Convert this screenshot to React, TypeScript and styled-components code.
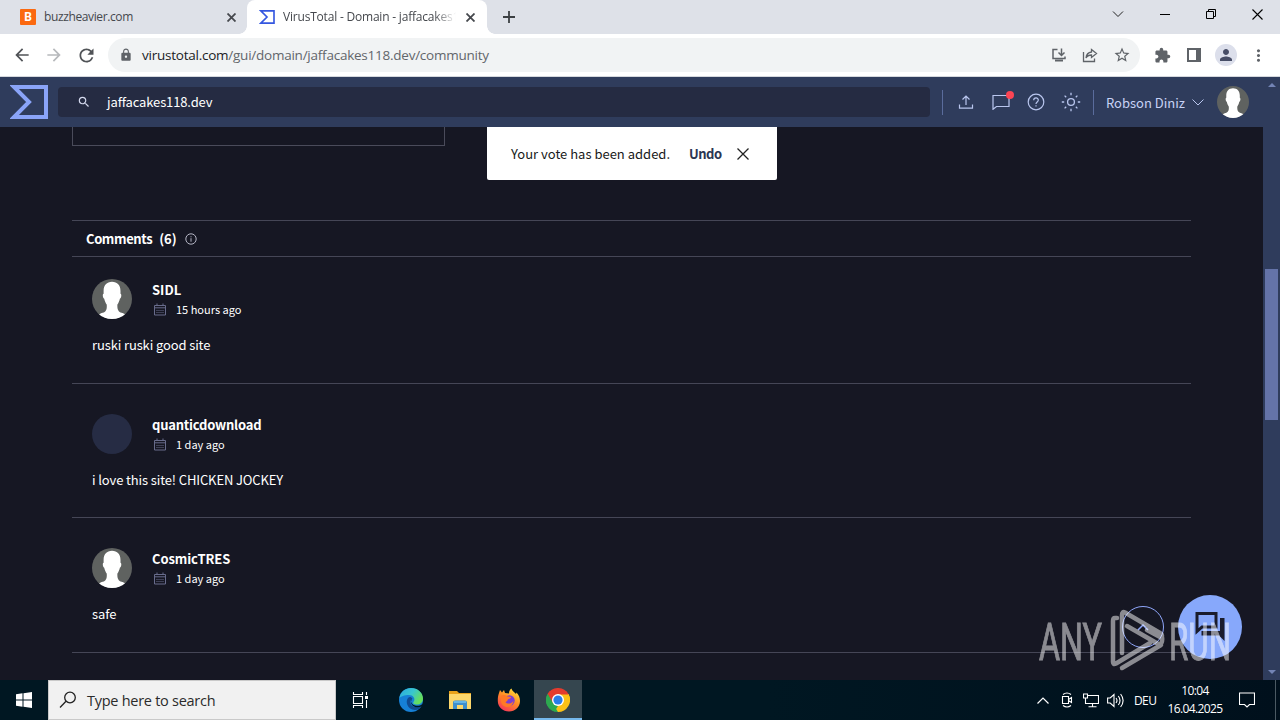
import React from 'react';
import styled, { createGlobalStyle } from 'styled-components';
import {
  MdArrowBack,
  MdArrowForward,
  MdRefresh,
  MdLock,
  MdStarBorder,
  MdExtension,
  MdPerson,
  MdMoreVert,
  MdSearch,
} from 'react-icons/md';

interface CommentData {
  id: number;
  author: string;
  nameSpacing: number;
  date: string;
  text: string;
  hasPhoto: boolean;
  top: number;
  height: number;
}

const comments: CommentData[] = [
  { id: 1, author: 'SIDL', nameSpacing: 0, date: '15 hours ago', text: 'ruski ruski good site', hasPhoto: true, top: 22, height: 127 },
  { id: 2, author: 'quanticdownload', nameSpacing: -0.22, date: '1 day ago', text: 'i love this site! CHICKEN JOCKEY', hasPhoto: false, top: 30, height: 134 },
  { id: 3, author: 'CosmicTRES', nameSpacing: -0.1, date: '1 day ago', text: 'safe', hasPhoto: true, top: 30, height: 135 },
];

const SigmaLogo: React.FC<{ width: number; height: number; color: string }> = ({ width, height, color }) => (
  <svg width={width} height={height} viewBox="0 0 38 34" fill="none">
    <path d="M4 2H36V32H4L19 17Z" stroke={color} strokeWidth="4" />
  </svg>
);

const Silhouette: React.FC<{ size: number }> = ({ size }) => (
  <svg width={size} height={size} viewBox="0 0 40 40">
    <defs>
      <clipPath id={`face${size}`}>
        <circle cx="20" cy="20" r="20" />
      </clipPath>
    </defs>
    <g clipPath={`url(#face${size})`}>
      <rect width="40" height="40" fill="#5f6260" />
      <path
        d="M20 2.800c5.400 0 8.600 3.600 8.500 9.400v2.600c1.400.3.800 4.500-.6 5-.6 2.600-1.500 4.400-2.500 5.700-.2 3 .1 5.200 1.400 6.700 2 2 5.600 1.600 7.500 4.200V42H6v-5.600c1.900-2.600 5.500-2.200 7.400-4.200 1.300-1.500 1.600-3.700 1.300-6.700-1-1.300-1.900-3.100-2.500-5.700-1.400-.5-2-4.700-.6-5v-2.600C11.500 6.400 14.700 2.800 20 2.800z"
        fill="#fff"
      />
    </g>
  </svg>
);

const CalendarIcon: React.FC = () => (
  <svg width="12" height="13" viewBox="0 0 12 13" fill="none" stroke="#686c8c">
    <path d="M.5 2.500h11v9.500H.5zM.5 4.800h11M3 .5v2M9 .5v2" />
    <path d="M2.500 7.500h7M2.500 9.500h7" strokeDasharray="1 1" />
  </svg>
);

const App: React.FC = () => {
  return (
    <>
      <GlobalStyle />
      <Screen>
        <TabStrip>
          <InactiveTab>
            <BuzzIcon>B</BuzzIcon>
            <TabTitle $spacing={-0.38}>buzzheavier.com</TabTitle>
            <CrossIcon size={9} weight={1.8} color="#45484d" />
          </InactiveTab>
          <ActiveTab>
            <SigmaLogo width={16} height={14} color="#3557e0" />
            <FadedTitle $spacing={-0.2}>VirusTotal - Domain - jaffacakes118</FadedTitle>
            <CrossIcon size={9} weight={1.8} color="#45484d" />
          </ActiveTab>
          <NewTab>
            <svg width="12" height="12" viewBox="0 0 12 12" stroke="#3c4043" strokeWidth="1.800">
              <path d="M6 0v12M0 6h12" />
            </svg>
          </NewTab>
          <WindowButtons>
            <svg width="12" height="8" viewBox="0 0 12 8" fill="none" stroke="#222">
              <path d="M1 1.500l5 5 5-5" />
            </svg>
            <svg width="10" height="10" viewBox="0 0 10 10" stroke="#000">
              <path d="M0 5.500h10" />
            </svg>
            <svg width="10" height="10" viewBox="0 0 10 10" fill="none" stroke="#000">
              <path d="M.5 2.500h7v7h-7zM2.500 2.500v-2h7v7h-2" />
            </svg>
            <CrossIcon size={11} weight={1.1} color="#000" />
          </WindowButtons>
        </TabStrip>

        <Toolbar>
          <NavButtons>
            <MdArrowBack size={20} color="#505357" />
            <MdArrowForward size={20} color="#b7b9bc" />
            <MdRefresh size={21} color="#505357" />
          </NavButtons>
          <AddressBar>
            <MdLock size={14} color="#5f6368" />
            <Url>
              <b>virustotal.com</b>/gui/domain/jaffacakes118.dev/community
            </Url>
            <AddressActions>
              <svg width="16" height="16" viewBox="0 0 16 16" fill="none" stroke="#5f6368" strokeWidth="1.500">
                <path d="M6.500 2.500H2v9h12V9.500" />
                <path d="M10.500 1.500v6.500M7.500 5.500l3 3 3-3" />
                <path d="M4 13.500h8" strokeWidth="2" />
              </svg>
              <svg width="16" height="16" viewBox="0 0 16 16" fill="none" stroke="#5f6368" strokeWidth="1.300">
                <path d="M1.500 5v9.500h11V11.500" />
                <path d="M9.500 2.500l5 4-5 4V8C7 8 5 9 4 11c.3-3.500 2.300-5.500 5.500-6z" />
              </svg>
              <MdStarBorder size={18} color="#5f6368" />
            </AddressActions>
          </AddressBar>
          <ToolbarActions>
            <MdExtension size={17} color="#5f6368" />
            <svg width="14" height="14" viewBox="0 0 14 14">
              <path d="M0 0h14v14H0zM2 2v10h7V2z" fill="#5f6368" fillRule="evenodd" />
            </svg>
            <Profile>
              <MdPerson size={18} color="#474d66" />
            </Profile>
            <MdMoreVert size={19} color="#5f6368" />
          </ToolbarActions>
        </Toolbar>

        <Page>
          <PageColumn>
            <SiteHeader>
              <SigmaLogo width={38} height={34} color="#8aa4f8" />
              <SearchBox>
                <MdSearch size={14} color="#d5daee" />
                <span>jaffacakes118.dev</span>
              </SearchBox>
              <HeaderActions>
                <Separator />
                <ActionSlot>
                  <svg width="16" height="16" viewBox="0 0 16 16" fill="none" stroke="#b9c6ee" strokeWidth="1.200">
                    <path d="M8 11V2M4.500 5.500L8 2l3.500 3.500M1.500 10.500v3.700h13v-3.700" />
                  </svg>
                </ActionSlot>
                <ActionSlot>
                  <BubbleWrap>
                    <svg width="18" height="16" viewBox="0 0 18 16" fill="none" stroke="#b9c6ee" strokeWidth="1.200">
                      <path d="M1 1.500h16v11H4.500L1 15.300z" />
                    </svg>
                    <RedDot />
                  </BubbleWrap>
                </ActionSlot>
                <ActionSlot>
                  <svg width="18" height="18" viewBox="0 0 18 18" fill="none" stroke="#b9c6ee" strokeWidth="1.200">
                    <circle cx="9" cy="9" r="7.800" />
                    <path d="M6.700 7.200C6.700 4.200 11.300 4.200 11.300 7c0 2-2.300 1.900-2.300 4M9 12.300v1.300" />
                  </svg>
                </ActionSlot>
                <ActionSlot>
                  <svg width="20" height="20" viewBox="0 0 20 20" fill="none" stroke="#b9c6ee" strokeWidth="1.300">
                    <circle cx="10" cy="10" r="3.400" />
                    <path d="M10 .8v2.400M10 16.800v2.400M.8 10h2.400M16.800 10h2.400M3.600 3.600l1.600 1.600M14.800 14.800l1.600 1.600M3.600 16.400l1.600-1.600M14.800 5.200l1.600-1.600" />
                  </svg>
                </ActionSlot>
                <Separator />
              </HeaderActions>
              <UserName>Robson Diniz</UserName>
              <svg width="12" height="7" viewBox="0 0 12 7" fill="none" stroke="#b9c6ee">
                <path d="M.5.500L6 6 11.500.500" />
              </svg>
              <UserAvatar>
                <Silhouette size={32} />
              </UserAvatar>
            </SiteHeader>

            <Content>
              <VoteBox />
              <CommentsHeader>
                <span>Comments</span>
                <span>(6)</span>
                <svg width="12" height="12" viewBox="0 0 12 12" fill="none" stroke="#b4b5c4">
                  <circle cx="6" cy="6" r="5.200" />
                  <path d="M6 5.200v3.500M6 3.300v1" />
                </svg>
              </CommentsHeader>
              {comments.map((comment) => (
                <CommentItem key={comment.id} $top={comment.top} $height={comment.height}>
                  <CommentHead>
                    {comment.hasPhoto ? <Silhouette size={40} /> : <EmptyAvatar />}
                    <CommentMeta>
                      <Author $spacing={comment.nameSpacing}>{comment.author}</Author>
                      <DateRow>
                        <CalendarIcon />
                        <span>{comment.date}</span>
                      </DateRow>
                    </CommentMeta>
                  </CommentHead>
                  <CommentText>{comment.text}</CommentText>
                </CommentItem>
              ))}
            </Content>
          </PageColumn>
          <Scrollbar>
            <Arrow $down={false} />
            <Thumb />
            <Arrow $down />
          </Scrollbar>

          <Toast>
            <span>Your vote has been added.</span>
            <b>Undo</b>
            <CrossIcon size={12} weight={1.3} color="#222" />
          </Toast>

          <ScrollTop>
            <svg width="12" height="7" viewBox="0 0 12 7" fill="none" stroke="#8fa6fa" strokeWidth="1.500">
              <path d="M1 6l5-5 5 5" />
            </svg>
          </ScrollTop>
          <ChatButton>
            <svg width="30" height="30" viewBox="0 0 30 30" fill="none">
              <path d="M2 1.500h19v13.500H7l-5 4.500z" stroke="#1a1c2c" strokeWidth="3" />
              <path d="M25 6h4.500v23l-5.500-5.500H6.500V19H25z" fill="#1a1c2c" />
            </svg>
          </ChatButton>
          <Watermark>
            <svg width="200" height="75" viewBox="0 0 200 75">
              <text x="2" y="60" textLength="63" lengthAdjust="spacingAndGlyphs">ANY</text>
              <g fill="none" stroke="#fff" strokeWidth="4.500" strokeLinecap="round" strokeLinejoin="round">
                <path d="M80 18h-2q-2 0-2 3v41q0 3 3 1.500L113 43" />
                <path d="M85 53V15q0-4 3-2.500L123 33q4 2.500 0 4L110 30" />
                <path d="M90 26l33 19q3-3 2-8M124 45L85 68" />
              </g>
              <text x="132" y="60" textLength="62" lengthAdjust="spacingAndGlyphs">RUN</text>
            </svg>
          </Watermark>
        </Page>

        <Taskbar>
          <StartButton>
            <svg width="16" height="16" viewBox="0 0 16 16" fill="#fff">
              <path d="M0 2.200l6.500-.9v6.200H0zM7.500 1.200L16 0v7.500H7.500zM0 8.500h6.500v6.200L0 13.800zM7.500 8.500H16V16l-8.500-1.200z" />
            </svg>
          </StartButton>
          <TaskSearch>
            <svg width="18" height="18" viewBox="0 0 18 18" fill="none" stroke="#222" strokeWidth="1.300">
              <circle cx="11" cy="6.500" r="5.300" />
              <path d="M7 10.300L1 16.500" />
            </svg>
            <span>Type here to search</span>
          </TaskSearch>
          <TaskApps>
            <TaskButton $active={false}>
              <svg width="17" height="16" viewBox="0 0 17 16" fill="none" stroke="#fff" strokeWidth="1.100">
                <path d="M1.500 0v2.500h9V0M1.500 4.500h9v7h-9zM1.500 16v-2.500h9V16M14.500 0v3M14.500 8v8" />
                <path d="M13 5.500h3" strokeWidth="3" />
              </svg>
            </TaskButton>
            <TaskButton $active={false}>
              <svg width="24" height="24" viewBox="0 0 24 24">
                <defs>
                  <linearGradient id="edgeTop" x1="0" y1="0" x2="1" y2=".5">
                    <stop offset="0" stopColor="#2aa8e0" />
                    <stop offset=".55" stopColor="#38c6cf" />
                    <stop offset="1" stopColor="#66df5a" />
                  </linearGradient>
                </defs>
                <circle cx="12" cy="12" r="12" fill="#1680d6" />
                <path d="M.3 10C1.500 3.500 6.500 0 12 0c7 0 12 5 12 10.500 0 4-3 6-6 6-3.500 0-4.500-1.300-3.500-2.500 2.500-3.500-.5-7-4.500-7C5.500 7 1.500 8.500.3 10z" fill="url(#edgeTop)" />
                <path d="M9.500 9.500C5.500 13 8.500 22 16 22c2.500 0 4.500-1 6.500-4C18 20.500 11 19 11.500 13.500c0-2 1.200-2.500 2-3-1-1.500-3-2-4-1z" fill="#104b91" />
                <path d="M12.800 10.500c-2 2.500-.3 6.500 4.200 7.200 2.500.4 4.500-.4 6-1.500l1-.2-1.500 2.500c-5 2.300-11-.5-10.500-5z" fill="#001722" />
              </svg>
            </TaskButton>
            <TaskButton $active={false}>
              <svg width="22" height="20" viewBox="0 0 22 20">
                <path d="M0 1h8l2 2h12v4H0z" fill="#e8a21a" />
                <path d="M0 4h22v15H0z" fill="#fcd76b" />
                <path d="M4 19v-6.500q0-2 2-2h10q2 0 2 2V19h-4v-4H8v4z" fill="#3f8fcc" />
                <path d="M5 11h12v2H5z" fill="#65b5e6" />
              </svg>
            </TaskButton>
            <TaskButton $active={false}>
              <svg width="24" height="24" viewBox="0 0 24 24">
                <defs>
                  <linearGradient id="fox" x1=".8" y1="0" x2=".2" y2="1">
                    <stop offset="0" stopColor="#ffe43d" />
                    <stop offset=".45" stopColor="#ff8f25" />
                    <stop offset="1" stopColor="#f5305c" />
                  </linearGradient>
                </defs>
                <path d="M2 5l1-3 2 2.500L7 2l1 3 4 .5C12 3 13 1.500 14.500.500c.5 2.500 3 3.500 4.500 5.500l.5-1.500C22 7 23 10 23 13c0 6-5 10.500-11 10.500S.8 19 .8 13C.8 10 1 7.500 2 5z" fill="url(#fox)" />
                <circle cx="12.500" cy="12.500" r="5.200" fill="#7b3fd3" />
                <path d="M4 8c2-1.500 5-1 6.500.5L14 9c0 1.500-2 2-3 2.200-.5 2-2 2-2.500 3 1.500 2 6 2 8-1.500-.5 5-4.500 7-8 6S3 14 4 8z" fill="#ff7a26" />
              </svg>
            </TaskButton>
            <TaskButton $active>
              <svg width="24" height="24" viewBox="0 0 24 24">
                <path d="M12 12L1.600 6A12 12 0 0 1 22.400 6z" fill="#e33b2e" />
                <path d="M12 12l10.400-6A12 12 0 0 1 12 24z" fill="#fbc116" />
                <path d="M12 12v12A12 12 0 0 1 1.600 6z" fill="#2da94f" />
                <path d="M12 6h10.400q1.600 3 1.600 6L17 14.500z" fill="#fbc116" />
                <path d="M17.200 15L12 24l-3-5 3-2z" fill="#fbc116" />
                <path d="M1.600 6l5.200 9 2-5L12 6.500h10.500L20 3H4z" fill="#e33b2e" />
                <path d="M1.600 6l5.200 9L12 18l-3.500 5.500A12 12 0 0 1 1.600 6z" fill="#2da94f" />
                <circle cx="12" cy="12" r="6" fill="#fff" />
                <circle cx="12" cy="12" r="4.600" fill="#287de8" />
              </svg>
            </TaskButton>
          </TaskApps>
          <Tray>
            <TrayIcon>
              <svg width="12" height="7" viewBox="0 0 12 7" fill="none" stroke="#fff" strokeWidth="1.200">
                <path d="M.5 6.500L6 1l5.500 5.500" />
              </svg>
            </TrayIcon>
            <TrayIcon>
              <svg width="12" height="16" viewBox="0 0 12 16" fill="none" stroke="#fff" strokeWidth="1.100">
                <path d="M1.500 4.500h6v7h-6zM7.500 7.500l3-2v5l-3-2M2 2.500Q6-.5 10 2.500M2 13.500q4 3 8 0" />
              </svg>
            </TrayIcon>
            <TrayIcon>
              <svg width="16" height="15" viewBox="0 0 16 15" fill="none" stroke="#fff" strokeWidth="1.100">
                <path d="M4.500 2.500h11v8h-11M.5 1h4v4h-4zM2.500 5v5.500h3M9.500 10.500v3M5.500 13.700h8" />
              </svg>
            </TrayIcon>
            <TrayIcon>
              <svg width="17" height="15" viewBox="0 0 17 15" fill="none" stroke="#fff" strokeWidth="1.100">
                <path d="M.6 5h2.600L7 1.500v12L3.200 10H.6zM9 5q2 2.500 0 5M11.300 3q3.500 4.500 0 9M13.600 1q5 6.500 0 13" />
              </svg>
            </TrayIcon>
            <Language>DEU</Language>
            <Clock>
              <span>10:04</span>
              <span>16.04.2025</span>
            </Clock>
            <svg width="16" height="16" viewBox="0 0 16 16" fill="none" stroke="#fff" strokeWidth="1.100">
              <path d="M.5 1h15v11.500h-5L8 15l-2.500-2.500h-5z" />
            </svg>
            <ShowDesktop />
          </Tray>
        </Taskbar>
      </Screen>
    </>
  );
};

const CrossIcon: React.FC<{ size: number; weight: number; color: string }> = ({ size, weight, color }) => (
  <svg width={size} height={size} viewBox={`0 0 ${size} ${size}`} stroke={color} strokeWidth={weight}>
    <path d={`M.5.5L${size - 0.5} ${size - 0.5}M${size - 0.5} .5L.5 ${size - 0.5}`} />
  </svg>
);

// Styles
const GlobalStyle = createGlobalStyle`
  * {
    box-sizing: border-box;
  }

  body {
    margin: 0;
    overflow: hidden;
    font-family: 'Open Sans', 'Noto Sans', sans-serif;
  }

  svg {
    display: block;
    flex-shrink: 0;
  }
`;

const Screen = styled.div`
  display: flex;
  flex-direction: column;
  width: 1280px;
  height: 720px;
  overflow: hidden;
  background: #161723;
`;

const TabStrip = styled.div`
  display: flex;
  height: 34px;
  background: #dee1e8;
`;

const InactiveTab = styled.div`
  display: flex;
  align-items: center;
  width: 247px;
  padding: 0 11px 0 20px;
  gap: 8px;
`;

const ActiveTab = styled.div`
  position: relative;
  display: flex;
  align-items: center;
  width: 240px;
  padding: 0 12px 0 12px;
  gap: 8px;
  background: #fff;
  border-radius: 8px 8px 0 0;

  &::before,
  &::after {
    content: '';
    position: absolute;
    bottom: 0;
    width: 8px;
    height: 8px;
  }

  &::before {
    left: -8px;
    background: radial-gradient(circle at 0 0, transparent 7.500px, #fff 8px);
  }

  &::after {
    right: -8px;
    background: radial-gradient(circle at 100% 0, transparent 7.500px, #fff 8px);
  }
`;

const BuzzIcon = styled.div`
  width: 16px;
  height: 16px;
  background: #fb6910;
  color: #fff;
  border-radius: 1px;
  font: bold 12px/16px 'Roboto', sans-serif;
  text-align: center;
`;

const TabTitle = styled.div<{ $spacing: number }>`
  flex: 1;
  min-width: 0;
  overflow: hidden;
  white-space: nowrap;
  font-size: 12px;
  line-height: 18px;
  letter-spacing: ${({ $spacing }) => $spacing}px;
  color: #45484d;
`;

const FadedTitle = styled(TabTitle)`
  mask-image: linear-gradient(to right, #000 86%, transparent 99%);
`;

const NewTab = styled.div`
  display: flex;
  align-items: center;
  padding-left: 16px;
`;

const WindowButtons = styled.div`
  display: flex;
  align-items: center;
  gap: 36px;
  margin-left: auto;
  padding: 0 17px 6px 0;
`;

const Toolbar = styled.div`
  display: flex;
  align-items: center;
  height: 43px;
  background: #fff;
  border-bottom: 1px solid #d5d8dd;
`;

const NavButtons = styled.div`
  display: flex;
  align-items: center;
  gap: 12px;
  width: 108px;
  padding-left: 12px;
`;

const AddressBar = styled.div`
  display: flex;
  align-items: center;
  width: 1032px;
  height: 34px;
  padding: 0 9px 0 11px;
  border-radius: 17px;
  background: #f1f3f4;
`;

const Url = styled.div`
  margin-left: 9px;
  font-size: 13.5px;
  letter-spacing: -0.24px;
  color: #62666b;

  b {
    font-weight: normal;
    color: #202124;
  }
`;

const AddressActions = styled.div`
  display: flex;
  align-items: center;
  gap: 15px;
  margin-left: auto;
`;

const ToolbarActions = styled.div`
  display: flex;
  align-items: center;
  gap: 16px;
  padding-left: 14px;
`;

const Profile = styled.div`
  display: flex;
  align-items: center;
  justify-content: center;
  width: 22px;
  height: 22px;
  margin: 0 -4px 0 -2px;
  border-radius: 50%;
  background: #dcdfeb;
`;

const Page = styled.div`
  position: relative;
  display: flex;
  height: 603px;
  font-family: 'Noto Sans CJK SC', 'Noto Sans', sans-serif;
`;

const PageColumn = styled.div`
  width: 1263px;
  overflow: hidden;
`;

const SiteHeader = styled.div`
  display: flex;
  align-items: center;
  height: 50px;
  padding: 0 14px 0 10px;
  background: #2f3c5c;
`;

const SearchBox = styled.div`
  display: flex;
  align-items: center;
  width: 872px;
  height: 30px;
  margin-left: 10px;
  padding-left: 19px;
  gap: 16px;
  border-radius: 4px;
  background: #252b42;
  color: #fff;
  font-size: 13px;
  line-height: 20px;
  letter-spacing: -0.13px;
`;

const HeaderActions = styled.div`
  display: flex;
  align-items: center;
  justify-content: space-between;
  width: 152px;
  margin-left: 12px;
`;

const ActionSlot = styled.div`
  display: flex;
  justify-content: center;
  width: 35px;

  &:nth-child(2) {
    margin-left: 5px;
  }

  &:nth-child(5) {
    margin-right: 5px;
  }
`;

const Separator = styled.div`
  width: 1px;
  height: 25px;
  background: #5a6c9c;
`;

const BubbleWrap = styled.div`
  position: relative;
`;

const RedDot = styled.div`
  position: absolute;
  top: -3px;
  right: -4px;
  width: 8px;
  height: 8px;
  border-radius: 50%;
  background: #fc4554;
`;

const UserName = styled.div`
  width: 86px;
  margin-left: 12px;
  white-space: nowrap;
  font-size: 13px;
  color: #c7d2f5;
`;

const UserAvatar = styled.div`
  margin-left: auto;
`;

const Content = styled.div`
  width: 1119px;
  margin-left: 72px;
`;

const VoteBox = styled.div`
  width: 373px;
  height: 19px;
  margin-bottom: 74px;
  border: 1px solid #4a4b5a;
  border-top: none;
`;

const CommentsHeader = styled.div`
  display: flex;
  align-items: center;
  gap: 7px;
  height: 37px;
  padding-left: 14px;
  border: solid #454656;
  border-width: 1px 0;
  color: #fff;
  font-size: 13px;
  font-weight: bold;
  letter-spacing: -0.4px;

  span + span {
    letter-spacing: 0;
  }

  svg {
    margin-left: 1px;
  }
`;

const CommentItem = styled.div<{ $top: number; $height: number }>`
  height: ${({ $height }) => $height}px;
  padding: ${({ $top }) => $top}px 20px 0;
  border-bottom: 1px solid #454656;
  color: #fff;
`;

const CommentHead = styled.div`
  display: flex;
  gap: 20px;
  height: 40px;
`;

const EmptyAvatar = styled.div`
  width: 40px;
  height: 40px;
  border-radius: 50%;
  background: #262c44;
`;

const CommentMeta = styled.div`
  display: flex;
  flex-direction: column;
`;

const Author = styled.div<{ $spacing: number }>`
  padding-top: 1px;
  font-size: 13px;
  font-weight: bold;
  line-height: 19px;
  letter-spacing: ${({ $spacing }) => $spacing}px;
`;

const DateRow = styled.div`
  display: flex;
  align-items: center;
  gap: 10px;
  padding-left: 2px;
  font-size: 11px;
  line-height: 20px;
`;

const CommentText = styled.div`
  margin-top: 16px;
  font-size: 13px;
  line-height: 20px;
  letter-spacing: -0.12px;
`;

const Scrollbar = styled.div`
  display: flex;
  flex-direction: column;
  align-items: center;
  justify-content: space-between;
  width: 17px;
  padding: 6px 0;
  background: #2f3c5c;
`;

const Arrow = styled.div<{ $down: boolean }>`
  border: 4px solid transparent;
  border-${({ $down }) => ($down ? 'top' : 'bottom')}-color: #7384b5;
  border-${({ $down }) => ($down ? 'bottom' : 'top')}-width: 0;
`;

const Thumb = styled.div`
  width: 13px;
  height: 151px;
  margin-bottom: 69px;
  background: #6473a8;
`;

const Toast = styled.div`
  position: absolute;
  top: 50px;
  left: 487px;
  display: flex;
  align-items: center;
  width: 290px;
  height: 53px;
  padding-left: 24px;
  border-radius: 0 0 2px 2px;
  background: #fff;
  color: #181a20;
  font-size: 13px;
  white-space: nowrap;

  b {
    width: 33px;
    margin: 0 15px 0 19px;
    letter-spacing: -0.5px;
    color: #2b3553;
  }
`;

const ScrollTop = styled.div`
  position: absolute;
  top: 529px;
  left: 1122px;
  display: flex;
  align-items: center;
  justify-content: center;
  width: 42px;
  height: 42px;
  border: 1px solid #8fa6fa;
  border-radius: 50%;
`;

const ChatButton = styled.div`
  position: absolute;
  top: 518px;
  left: 1178px;
  display: flex;
  align-items: center;
  justify-content: center;
  width: 64px;
  height: 64px;
  border-radius: 50%;
  background: #87a8fb;
`;

const Watermark = styled.div`
  position: absolute;
  top: 523px;
  left: 1037px;
  opacity: 0.5;

  text {
    fill: #fff;
    stroke: #fff;
    stroke-width: 1px;
    font-family: 'Roboto', sans-serif;
    font-size: 52px;
  }
`;

const Taskbar = styled.div`
  display: flex;
  height: 40px;
  background: linear-gradient(to right, #001722 60%, #00101c);
  color: #fff;
`;

const StartButton = styled.div`
  display: flex;
  align-items: center;
  justify-content: center;
  width: 48px;
`;

const TaskSearch = styled.div`
  display: flex;
  align-items: center;
  width: 288px;
  padding-left: 10px;
  gap: 10px;
  border: 1px solid #c9c9c9;
  background: #f1f1f1;
  color: #2b2b2b;
  font-size: 14.5px;
  letter-spacing: -0.27px;
  white-space: nowrap;
`;

const TaskApps = styled.div`
  display: flex;
  gap: 1px;
`;

const TaskButton = styled.div<{ $active: boolean }>`
  display: flex;
  align-items: center;
  justify-content: center;
  width: 48px;
  border-bottom: 2px solid ${({ $active }) => ($active ? '#76b9ed' : 'transparent')};
  padding-top: 2px;
  background: ${({ $active }) => ($active ? '#35464f' : 'transparent')};

  &:first-child {
    margin-right: 2px;
  }
`;

const Tray = styled.div`
  display: flex;
  align-items: center;
  margin-left: auto;
`;

const TrayIcon = styled.div`
  display: flex;
  justify-content: center;
  width: 24px;
`;

const Language = styled.div`
  width: 34px;
  margin-left: 7px;
  font-size: 12px;
  letter-spacing: -0.6px;
`;

const Clock = styled.div`
  display: flex;
  flex-direction: column;
  align-items: center;
  width: 54px;
  margin-right: 17px;
  font-size: 12px;
  line-height: 18px;
  letter-spacing: -0.6px;
`;

const ShowDesktop = styled.div`
  width: 5px;
  height: 40px;
  margin-left: 20px;
  border-left: 1px solid #4b5a63;
`;

export default App;
